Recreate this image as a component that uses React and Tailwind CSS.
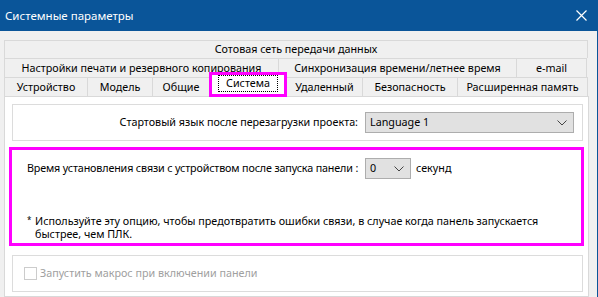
const Chevron = () => (
    <svg width="10" height="6" viewBox="0 0 10 6" className="shrink-0">
        <polyline points="0.5,0.5 5,5 9.5,0.5" fill="none" stroke="#444" strokeWidth="1" />
    </svg>
)

const Tab = ({ w, children, first }) => (
    <div className={`h-full flex items-center justify-center bg-[#f0f0f0] border-t border-r border-[#d9d9d9] whitespace-nowrap ${first ? 'border-l' : ''} ${w}`}>
        {children}
    </div>
)

const App = () => {
    return (
        <div className="w-[598px] h-[297px] bg-[#f0f0f0] flex flex-col overflow-hidden border-r border-[#0a5599] font-['Noto_Sans',sans-serif] text-[10.75px] text-black leading-none">
            <div className="h-[31px] shrink-0 bg-[#0a5599] flex items-center justify-between pl-[5px] pr-[10px] text-white text-[11.5px]">
                <span>Системные параметры</span>
                <svg width="11" height="11" viewBox="0 0 11 11">
                    <path d="M0.5 0.5 L10.5 10.5 M10.5 0.5 L0.5 10.5" stroke="#fff" strokeWidth="1.2" />
                </svg>
            </div>

            <div className="flex-1 flex flex-col pl-[4px] pr-[8px] pt-[9px]">
                <div className="h-[18px] flex">
                    <Tab first w="w-[584px]">Сотовая сеть передачи данных</Tab>
                </div>
                <div className="h-[19px] flex">
                    <Tab first w="w-[275px]">Настройки печати и резервного копирования</Tab>
                    <Tab w="w-[238px]">Синхронизация времени/летнее время</Tab>
                    <Tab w="w-[70px]">e-mail</Tab>
                </div>
                <div className="h-[19px] flex">
                    <Tab first w="w-[84px]">Устройство</Tab>
                    <Tab w="w-[65px]">Модель</Tab>
                    <Tab w="w-[57px]">Общие</Tab>
                    <div className="relative w-[77px] h-full">
                        <div className="absolute left-[-1px] top-[-5px] w-[78px] h-[25px] border-[3px] border-[#ff00ff] bg-white flex justify-center z-10">
                            <span className="h-[17px] px-[7px] flex items-center border border-dotted border-black">Система</span>
                        </div>
                    </div>
                    <Tab w="w-[76px]">Удаленный</Tab>
                    <Tab w="w-[95px]">Безопасность</Tab>
                    <Tab w="w-[130px]">Расширенная память</Tab>
                </div>

                <div className="flex-1 bg-white border border-[#d9d9d9] pl-[7px] pt-[7px]">
                    <div className="w-[571px] h-[37px] border border-[#dcdcdc] flex items-center justify-end pr-[8px] gap-[7px]">
                        <span className="whitespace-nowrap">Стартовый язык после перезагрузки проекта:</span>
                        <div className="w-[209px] h-[21px] bg-[#e1e1e1] border border-[#adadad] flex items-center justify-between pl-[4px] pr-[6px]">
                            <span>Language 1</span>
                            <Chevron />
                        </div>
                    </div>

                    <div className="w-[575px] h-[99px] ml-[-3px] mt-[6px] border-[3px] border-[#ff00ff] pl-[15px] pt-[8px] flex flex-col">
                        <div className="flex items-center h-[21px]">
                            <span className="w-[338px] whitespace-nowrap tracking-[-0.15px]">Время установления связи с устройством после запуска панели :</span>
                            <div className="w-[46px] h-[21px] bg-[#e1e1e1] border border-[#adadad] flex items-center justify-between pl-[4px] pr-[6px]">
                                <span>0</span>
                                <Chevron />
                            </div>
                            <span className="ml-[5px]">секунд</span>
                        </div>
                        <div className="mt-[36px] flex leading-[13px]">
                            <span className="w-[8px] text-[8px] leading-[9px]">*</span>
                            <span className="w-[522px]">Используйте эту опцию, чтобы предотвратить ошибки связи, в случае когда панель запускается быстрее, чем ПЛК.</span>
                        </div>
                    </div>

                    <div className="w-[571px] h-[37px] mt-[9px] border border-[#dcdcdc] flex items-center pl-[11px] gap-[3px] text-[#a0a0a0]">
                        <div className="w-[13px] h-[13px] border border-[#cccccc] bg-white" />
                        <span>Запустить макрос при включении панели</span>
                    </div>
                </div>
            </div>
        </div>
    )
}

export default App
